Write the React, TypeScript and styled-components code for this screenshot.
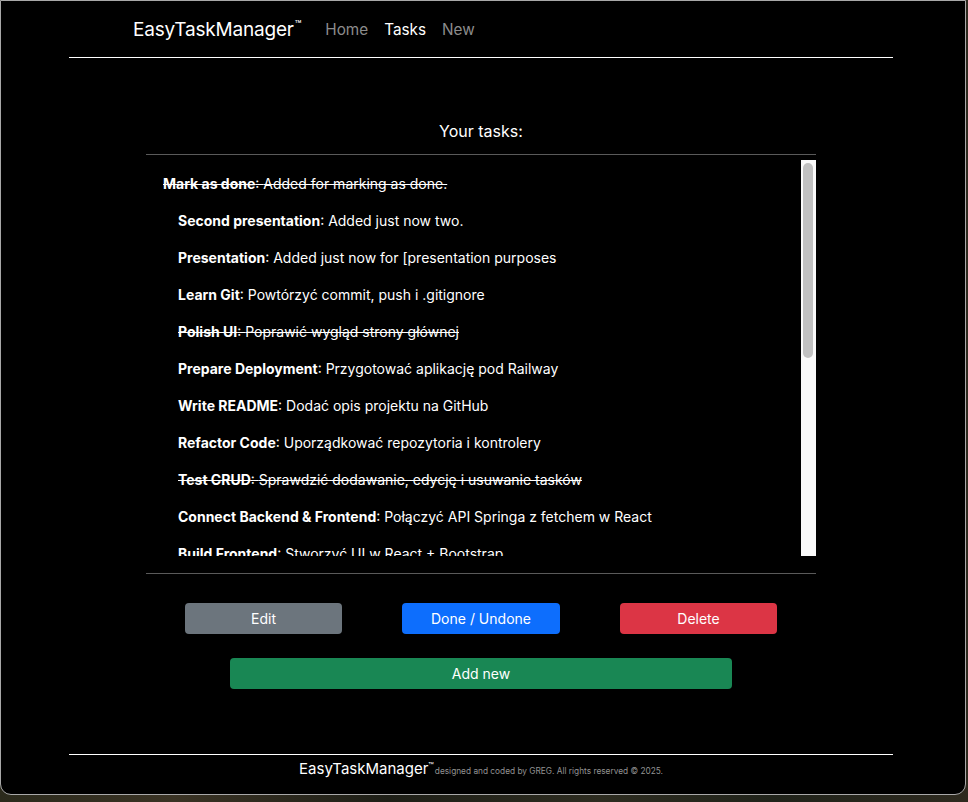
import styled, { createGlobalStyle } from 'styled-components';

const GlobalStyle = createGlobalStyle`
	html, body {
		margin: 0;
		padding: 0;
		height: 100%;
		overflow: hidden;
	}
	body {
		background: linear-gradient(90deg, #2b2a1c 0%, #3a3324 18%, #1e1f17 40%, #2d2c20 62%, #20231a 80%, #2e2a1f 100%);
		font-family: Inter, "Noto Sans", "Liberation Sans", sans-serif;
		color: #fff;
	}
`;

type Task = {
	title: string;
	description: string;
	done: boolean;
};

const tasks: Task[] = [
	{ title: 'Mark as done', description: 'Added for marking as done.', done: true },
	{ title: 'Second presentation', description: 'Added just now two.', done: false },
	{ title: 'Presentation', description: 'Added just now for [presentation purposes', done: false },
	{ title: 'Learn Git', description: 'Powtórzyć commit, push i .gitignore', done: false },
	{ title: 'Polish UI', description: 'Poprawić wygląd strony głównej', done: true },
	{ title: 'Prepare Deployment', description: 'Przygotować aplikację pod Railway', done: false },
	{ title: 'Write README', description: 'Dodać opis projektu na GitHub', done: false },
	{ title: 'Refactor Code', description: 'Uporządkować repozytoria i kontrolery', done: false },
	{ title: 'Test CRUD', description: 'Sprawdzić dodawanie, edycję i usuwanie tasków', done: true },
	{ title: 'Connect Backend & Frontend', description: 'Połączyć API Springa z fetchem w React', done: false },
	{ title: 'Build Frontend', description: 'Stworzyć UI w React + Bootstrap', done: false },
];

const Window = styled.div`
	box-sizing: border-box;
	width: 966px;
	height: 795px;
	background: #000;
	border: 1px solid #a8a8a8;
	border-radius: 0 0 11px 11px;
	display: flex;
	flex-direction: column;
	overflow: hidden;
`;

const Shell = styled.div`
	width: 824px;
	margin-left: 68px;
	display: flex;
	flex-direction: column;
	flex: 1;
`;

const Navbar = styled.nav`
	height: 57px;
	display: flex;
	align-items: center;
	padding: 0 0 0 64px;
	box-sizing: border-box;
	border-bottom: 1px solid #fff;
`;

const Brand = styled.span`
	font-size: 19px;
	color: #fff;
	margin-right: 16px;
	letter-spacing: -0.2px;

	sup {
		font-size: 11px;
		vertical-align: 8px;
		margin-left: 1px;
	}
`;

const NavLink = styled.a<{ $active?: boolean }>`
	font-size: 15.3px;
	padding: 0 8px;
	color: ${(p) => (p.$active ? '#fff' : '#8c8c8c')};
	text-decoration: none;
`;

const Main = styled.main`
	flex: 1;
	display: flex;
	flex-direction: column;
	align-items: center;
`;

const Heading = styled.h2`
	margin: 61px 0 0;
	height: 35px;
	font-size: 16px;
	font-weight: 400;
	line-height: 24px;
`;

const Card = styled.section`
	width: 670px;
	border-top: 1px solid #5a5a5a;
	border-bottom: 1px solid #5a5a5a;
	padding: 5px 0 17px;
	display: flex;
`;

const TaskList = styled.ul`
	flex: 1;
	list-style: none;
	margin: 0;
	padding: 5px 0 0;
	height: 391px;
	overflow: hidden;
`;

const ScrollTrack = styled.div`
	width: 15px;
	height: 396px;
	background: #fafafa;
	padding: 3px 3px 0 2px;
	box-sizing: border-box;
`;

const ScrollThumb = styled.div`
	height: 195px;
	border-radius: 5px;
	background: #c1c1c1;
`;

const TaskItem = styled.li<{ $done: boolean; $first?: boolean }>`
	height: 37px;
	display: flex;
	align-items: center;
	padding-left: ${(p) => (p.$first ? '17px' : '32px')};
	font-size: 14px;
	white-space: nowrap;
	text-decoration: ${(p) => (p.$done ? 'line-through' : 'none')};

	b {
		font-weight: 700;
	}
`;

const ButtonRow = styled.div`
	display: grid;
	grid-template-columns: repeat(3, 157.5px);
	column-gap: 60px;
	margin-top: 29px;
`;

const Button = styled.button<{ $tone: string; $wide?: boolean }>`
	height: 31px;
	width: ${(p) => (p.$wide ? '502px' : '100%')};
	border: none;
	border-radius: 4px;
	background: ${(p) => p.$tone};
	color: #fff;
	font-family: inherit;
	font-size: 14px;
	cursor: pointer;
`;

const AddRow = styled.div`
	margin-top: 24px;
`;

const Footer = styled.footer`
	border-top: 1px solid #fff;
	height: 40px;
	display: flex;
	justify-content: center;
	align-items: baseline;
	padding-top: 4px;
	box-sizing: border-box;
`;

const FooterBrand = styled.span`
	font-size: 15px;
	color: #fff;

	sup {
		font-size: 9px;
		vertical-align: 5px;
	}
`;

const FooterNote = styled.small`
	font-size: 8.3px;
	color: #939393;
	margin-left: 1px;
`;

const App = () => {
	return (
		<>
			<GlobalStyle />
			<Window>
				<Shell>
					<Navbar>
						<Brand>
							EasyTaskManager<sup>™</sup>
						</Brand>
						<NavLink href="#">Home</NavLink>
						<NavLink href="#" $active>
							Tasks
						</NavLink>
						<NavLink href="#">New</NavLink>
					</Navbar>
					<Main>
						<Heading>Your tasks:</Heading>
						<Card>
							<TaskList>
								{tasks.map((t, i) => (
									<TaskItem key={t.title} $done={t.done} $first={i === 0}>
										<b>{t.title}</b>: {t.description}
									</TaskItem>
								))}
							</TaskList>
							<ScrollTrack>
								<ScrollThumb />
							</ScrollTrack>
						</Card>
						<ButtonRow>
							<Button $tone="#6c757d">Edit</Button>
							<Button $tone="#0d6efd">Done / Undone</Button>
							<Button $tone="#dc3545">Delete</Button>
						</ButtonRow>
						<AddRow>
							<Button $tone="#198754" $wide>
								Add new
							</Button>
						</AddRow>
					</Main>
					<Footer>
						<FooterBrand>
							EasyTaskManager<sup>™</sup>
						</FooterBrand>
						<FooterNote>designed and coded by GREG. All rights reserved © 2025.</FooterNote>
					</Footer>
				</Shell>
			</Window>
		</>
	);
};

export default App;
